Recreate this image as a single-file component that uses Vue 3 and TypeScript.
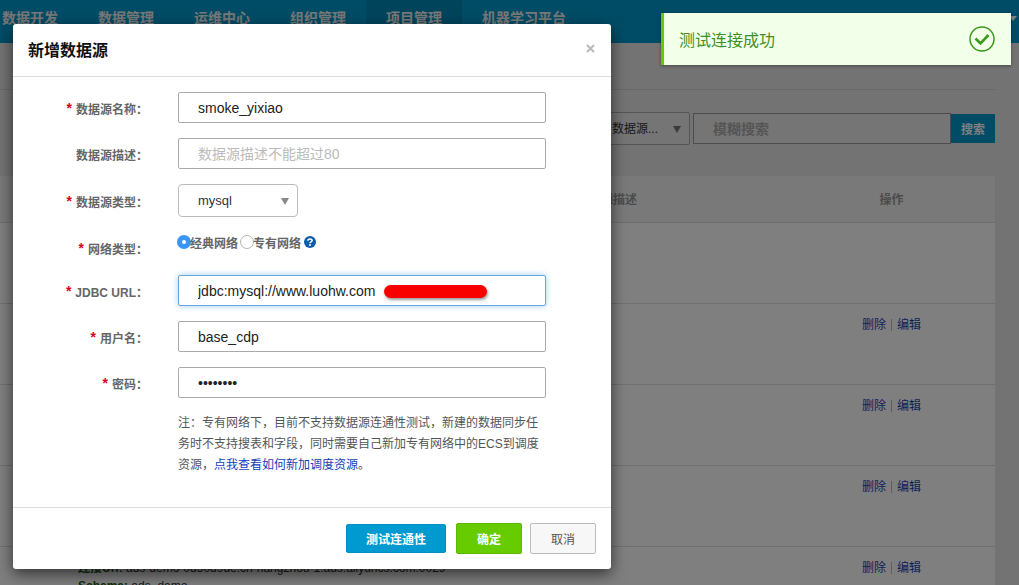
<script setup lang="ts">
import { ref } from 'vue'

interface NavItem {
  label: string
  active?: boolean
}

const navItems: NavItem[] = [
  { label: '数据开发' },
  { label: '数据管理' },
  { label: '运维中心' },
  { label: '组织管理' },
  { label: '项目管理', active: true },
  { label: '机器学习平台' },
]

interface Row {
  id: number
  actions: boolean
  url?: string
  schema?: string
}

const rows: Row[] = [
  { id: 1, actions: false },
  { id: 2, actions: true },
  { id: 3, actions: true },
  { id: 4, actions: true },
  { id: 5, actions: true, url: 'ads-demo-0d50d9de.cn-hangzhou-1.ads.aliyuncs.com:0029', schema: 'ads_demo' },
]

const name = ref('smoke_yixiao')
const description = ref('')
const sourceType = ref('mysql')
const network = ref('classic')
const jdbcUrl = ref('jdbc:mysql://www.luohw.com')
const username = ref('base_cdp')
const password = ref('password')
</script>

<template>
  <div class="page">
    <header class="topbar">
      <nav class="nav">
        <a v-for="item in navItems" :key="item.label" href="#" class="nav-item" :class="{ active: item.active }">{{ item.label }}</a>
      </nav>
      <svg class="user-caret" width="8" height="6" viewBox="0 0 8 6"><path d="M0 0h8L4 5z" fill="#fff" /></svg>
    </header>

    <main class="content">
      <div class="heading"></div>
      <div class="toolbar">
        <div class="select-wrap filter">
          <select aria-label="数据源类型筛选"><option>数据源...</option></select>
          <svg class="arrow" width="8" height="7" viewBox="0 0 8 7"><path d="M0 0h8L4 7z" fill="#777" /></svg>
        </div>
        <input class="search" type="text" placeholder="模糊搜索" aria-label="模糊搜索" />
        <button type="button" class="search-btn">搜索</button>
      </div>
      <table class="table">
        <colgroup>
          <col class="col-main" />
          <col class="col-desc" />
          <col class="col-ops" />
        </colgroup>
        <thead>
          <tr>
            <td></td>
            <th class="desc">数据源描述</th>
            <th>操作</th>
          </tr>
        </thead>
        <tbody>
          <tr v-for="row in rows" :key="row.id">
            <td class="info">
              <template v-if="row.url">
                <div><b>连接Url:</b> {{ row.url }}</div>
                <div><b>Schema:</b> {{ row.schema }}</div>
              </template>
            </td>
            <td></td>
            <td class="ops">
              <div v-if="row.actions" class="ops-links">
                <a href="#">删除</a><i class="sep"></i><a href="#">编辑</a>
              </div>
            </td>
          </tr>
        </tbody>
      </table>
    </main>

    <div class="backdrop"></div>

    <section class="modal" role="dialog" aria-labelledby="modal-title">
      <header class="modal-head">
        <h2 id="modal-title">新增数据源</h2>
        <button type="button" class="close" aria-label="关闭">
          <svg width="9" height="9" viewBox="0 0 9 9"><path d="M1 1l7 7M8 1L1 8" stroke="#bbb" stroke-width="2" /></svg>
        </button>
      </header>

      <form class="modal-body" @submit.prevent>
        <div class="field">
          <label class="label" for="f-name"><span class="req">*</span>数据源名称：</label>
          <input id="f-name" v-model="name" class="input" type="text" />
        </div>
        <div class="field">
          <label class="label" for="f-desc">数据源描述：</label>
          <input id="f-desc" v-model="description" class="input" type="text" placeholder="数据源描述不能超过80" />
        </div>
        <div class="field">
          <label class="label" for="f-type"><span class="req">*</span>数据源类型：</label>
          <div class="select-wrap type">
            <select id="f-type" v-model="sourceType"><option value="mysql">mysql</option></select>
            <svg class="arrow" width="8" height="7" viewBox="0 0 8 7"><path d="M0 0h8L4 7z" fill="#888" /></svg>
          </div>
        </div>
        <div class="field network">
          <span id="f-net" class="label"><span class="req">*</span>网络类型：</span>
          <div class="radios" role="radiogroup" aria-labelledby="f-net">
            <label><input v-model="network" type="radio" name="network" value="classic" />经典网络</label>
            <label><input v-model="network" type="radio" name="network" value="vpc" />专有网络</label>
            <svg class="help" width="12" height="12" viewBox="0 0 12 12">
              <circle cx="6" cy="6" r="6" fill="#0b5cab" />
              <path d="M3.9 4.8C3.9 2.4 8.1 2.4 8.1 4.6C8.1 5.9 6 5.8 6 7.3" fill="none" stroke="#fff" stroke-width="1.6" />
              <rect x="5.1" y="8.2" width="1.8" height="1.6" fill="#fff" />
            </svg>
          </div>
        </div>
        <div class="field">
          <label class="label" for="f-url"><span class="req">*</span>JDBC URL：</label>
          <div class="url-box">
            <input id="f-url" v-model="jdbcUrl" class="input focused" type="text" />
            <span class="redaction"></span>
          </div>
        </div>
        <div class="field">
          <label class="label" for="f-user"><span class="req">*</span>用户名：</label>
          <input id="f-user" v-model="username" class="input" type="text" />
        </div>
        <div class="field">
          <label class="label" for="f-pass"><span class="req">*</span>密码：</label>
          <input id="f-pass" v-model="password" class="input" type="password" />
        </div>
        <p class="note">注：专有网络下，目前不支持数据源连通性测试，新建的数据同步任务时不支持搜表和字段，同时需要自己新加专有网络中的ECS到调度资源，<a href="#">点我查看如何新加调度资源</a>。</p>
      </form>

      <footer class="modal-foot">
        <button type="button" class="btn test">测试连通性</button>
        <button type="button" class="btn ok">确定</button>
        <button type="button" class="btn cancel">取消</button>
      </footer>
    </section>

    <div class="toast" role="status">
      <span>测试连接成功</span>
      <svg width="26" height="26" viewBox="0 0 26 26" fill="none" stroke="#3c9a1c">
        <circle cx="13" cy="13" r="12" stroke-width="1.5" />
        <path d="M6.5 12.5L11.5 17.5L19.5 9" stroke-width="2.6" />
      </svg>
    </div>
  </div>
</template>

<style>
html,
body {
  margin: 0;
  background: #e6e6e6;
}
</style>

<style scoped>
.page,
.page * {
  box-sizing: border-box;
}
.page {
  position: relative;
  height: 100vh;
  overflow: hidden;
  background: #e6e6e6;
  color: #333;
  font-family: "Liberation Sans", "Noto Sans CJK SC", sans-serif;
  font-size: 12px;
}
.page input,
.page select,
.page button {
  font-family: inherit;
  outline: none;
}
a {
  text-decoration: none;
}
.topbar {
  display: flex;
  justify-content: space-between;
  height: 43px;
  background: #0099cc;
}
.nav {
  display: flex;
}
.nav-item {
  padding: 0 20px;
  line-height: 36px;
  font-size: 14px;
  font-weight: bold;
  color: #f0f0f0;
}
.nav-item:first-child {
  padding-left: 2px;
}
.nav-item.active {
  background: #0088b8;
}
.user-caret {
  margin: 16px 2px 0 0;
}
.content {
  padding-right: 24px;
}
.heading {
  height: 47px;
  border-bottom: 1px solid #d0d0d0;
}
.toolbar {
  display: flex;
  align-items: center;
  justify-content: flex-end;
  padding: 22px 0 31px;
}
.select-wrap {
  position: relative;
  display: flex;
}
.select-wrap select {
  width: 100%;
  height: 33px;
  padding: 0 19px;
  appearance: none;
  background: #fff;
  border: 1px solid #bbb;
  border-radius: 4px;
  color: #333;
}
.arrow {
  position: absolute;
  top: 14px;
  right: 9px;
}
.filter {
  width: 98px;
  margin-right: 3px;
}
.filter select {
  background: #eaeaea;
  border-color: #aaa;
  border-radius: 2px;
  font-size: 12px;
}
.search {
  width: 258px;
  height: 31px;
  padding: 0 19px;
  background: #eaeaea;
  border: 1px solid #999;
  font-size: 14px;
  font-weight: bold;
}
.search::placeholder {
  color: #aaa;
}
.search-btn {
  width: 44px;
  height: 29px;
  padding: 0;
  border: 0;
  background: #0099cc;
  color: #fff;
  font-size: 12px;
  font-weight: bold;
}
.table {
  width: 100%;
  table-layout: fixed;
  border-collapse: collapse;
  background: #fff;
}
.col-desc {
  width: 211px;
}
.col-ops {
  width: 207px;
}
.table thead tr {
  height: 46px;
  background: #f2f2f2;
  color: #999;
}
.table .desc {
  text-align: left;
}
.table th {
  padding: 0;
}
.table tr {
  border-bottom: 1px solid #dedede;
}
.table tbody tr {
  height: 81px;
}
.table tbody td {
  padding: 12px 0 0;
  vertical-align: top;
  line-height: 18px;
}
.table tbody .info {
  padding-left: 78px;
}
.info b {
  color: #285a14;
}
.ops-links {
  display: flex;
  justify-content: center;
  align-items: center;
}
.ops-links a {
  color: #1d43b8;
}
.sep {
  width: 1px;
  height: 12px;
  margin: 0 5px;
  background: #bbb;
}
.backdrop {
  position: absolute;
  inset: 0;
  background: rgba(0, 0, 0, 0.5);
}
.modal {
  position: absolute;
  top: 24px;
  left: 13px;
  width: 598px;
  background: #fff;
  border-radius: 3px;
  box-shadow: 0 5px 15px rgba(0, 0, 0, 0.6);
}
.modal-head {
  display: flex;
  justify-content: space-between;
  align-items: center;
  height: 53px;
  padding: 0 16px 2px 15px;
  border-bottom: 1px solid #ddd;
}
.modal-head h2 {
  margin: 0;
  font-size: 16px;
  font-weight: bold;
  color: #111;
}
.close {
  display: flex;
  padding: 0;
  margin-bottom: 2px;
  border: 0;
  background: none;
}
.modal-body {
  display: flex;
  flex-direction: column;
  gap: 15px;
  padding: 15px 65px 31px 0;
}
.field {
  display: grid;
  grid-template-columns: 135px 1fr;
  column-gap: 30px;
  align-items: center;
}
.label {
  display: flex;
  justify-content: flex-end;
  align-items: center;
  padding-top: 4px;
  line-height: 18px;
  font-weight: bold;
  color: #666;
}
.req {
  margin: 0 4px 4px 0;
  line-height: 14px;
  font-size: 14px;
  color: #d9001b;
}
.input {
  width: 100%;
  height: 31px;
  padding: 0 19px;
  background: #fff;
  border: 1px solid #aaa;
  border-radius: 2px;
  font-size: 14px;
  color: #222;
}
.input::placeholder {
  color: #bbb;
}
.input.focused {
  border-color: #66a5e0;
  box-shadow: 0 0 6px rgba(102, 175, 233, 0.6);
}
.type {
  width: 120px;
}
.type select {
  font-size: 13px;
}
.network {
  height: 28px;
}
.network .label {
  padding-top: 8px;
}
.radios {
  display: flex;
  align-items: center;
  margin: 0 0 8px -1px;
}
.radios label {
  display: flex;
  align-items: center;
  margin-right: 2px;
  font-weight: bold;
  color: #666;
}
.radios input {
  width: 14px;
  height: 14px;
  margin: 0 -1px 0 0;
  appearance: none;
  border: 1px solid #b5b5b5;
  border-radius: 50%;
  background: #fff;
}
.radios input:checked {
  border: 5px solid #3b95f5;
}
.help {
  margin-left: 1px;
}
.url-box {
  position: relative;
  display: flex;
}
.redaction {
  position: absolute;
  top: 10px;
  left: 206px;
  width: 103px;
  height: 13px;
  border-radius: 7px;
  background: #f90000;
  box-shadow: 1px 2px 3px rgba(0, 0, 0, 0.4);
}
.note {
  width: 362px;
  margin: 0 0 0 165px;
  line-height: 21px;
  color: #555;
}
.note a {
  color: #1440b8;
}
.modal-foot {
  display: flex;
  justify-content: flex-end;
  align-items: center;
  padding: 15px;
  border-top: 1px solid #ddd;
}
.btn {
  width: 66px;
  height: 31px;
  padding: 0;
  border: 1px solid #5cb800;
  border-radius: 2px;
  font-size: 12px;
  font-weight: bold;
  color: #fff;
}
.btn.test {
  width: 100px;
  height: 29px;
  margin-right: 10px;
  border-color: #0090c4;
  background: #0099d0;
}
.btn.ok {
  margin-right: 8px;
  background: #66cc00;
}
.btn.cancel {
  border-color: #bbb;
  background: #f7f7f7;
  color: #555;
  font-weight: normal;
}
.toast {
  position: absolute;
  top: 13px;
  right: 8px;
  display: flex;
  justify-content: space-between;
  align-items: center;
  width: 350px;
  height: 52px;
  padding: 0 16px 0 15px;
  border-left: 3px solid #66c800;
  background: #f2ffe9;
  box-shadow: 0 1px 3px rgba(0, 0, 0, 0.4);
  font-size: 16px;
  color: #3f8f24;
}
</style>
